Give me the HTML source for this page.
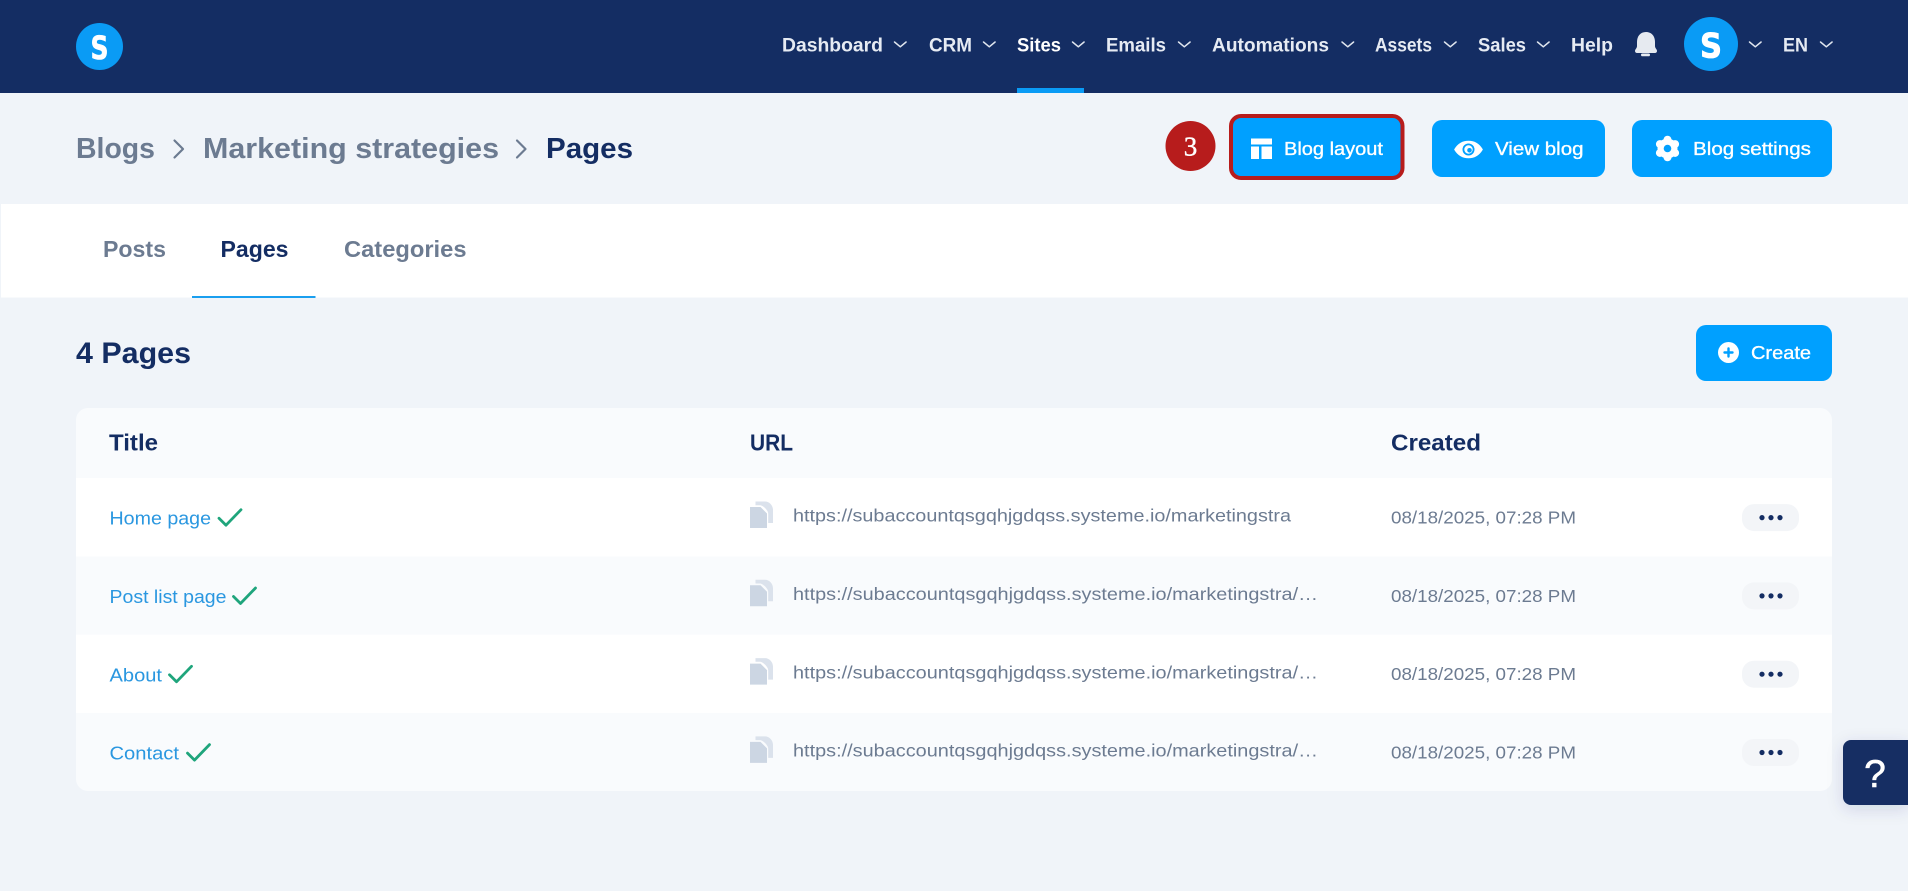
<!DOCTYPE html>
<html lang="en">
<head>
<meta charset="utf-8">
<title>Blog pages</title>
<style>
html,body{margin:0;padding:0;background:#f0f4f9;width:1908px;height:891px;overflow:hidden}
svg{display:block}
text{font-family:"Liberation Sans",sans-serif}
.nav{font-size:19px;font-weight:700;fill:#e6ebf3}
.bc{font-size:29px;font-weight:700;fill:#6c7b91}
.tab{font-size:23px;font-weight:700;fill:#6c7b91}
.btn{font-size:18.5px;fill:#fff;stroke:#fff;stroke-width:.35}
.th{font-size:23px;font-weight:700;fill:#142d63}
.lnk{font-size:18.5px;fill:#2a97e0}
.url{font-size:17.5px;fill:#6c7b91}
.logo{font-weight:700;fill:#fff;stroke:#fff;font-family:"DejaVu Sans",sans-serif}
.chev{fill:none;stroke:#dfe5ee;stroke-width:1.5;stroke-linecap:round;stroke-linejoin:round}
.bcc{fill:none;stroke:#6c7b91;stroke-width:2.2;stroke-linecap:round;stroke-linejoin:round}
.chk{fill:none;stroke:#1fa57c;stroke-width:2.8;stroke-linecap:round;stroke-linejoin:round}
</style>
</head>
<body>
<svg width="1908" height="891" viewBox="0 0 1908 891" xmlns="http://www.w3.org/2000/svg">
<defs>
  <path id="cv" class="chev" d="M0 0l5.800 4.800L11.600 0"/>
  <g id="copy">
    <path fill="#ccd6e3" d="M750 507h10.500l6.500 6.500V528h-17z"/>
    <path fill="#dbe2ec" d="M755.500 501.500h9.500c4.500 0 8 4 8 8.500V523h-4.800V513.500c0-3-5-8-8-8.300h-4.700z"/>
  </g>
  <path id="ck" class="chk" d="M0 8.500L7 15.500L22 0"/>
  <g id="act">
    <rect x="1742" y="-13.500" width="57" height="27" rx="12" fill="#f3f5f8"/>
    <circle cx="1762" cy="0" r="2.600" fill="#142d63"/>
    <circle cx="1771" cy="0" r="2.600" fill="#142d63"/>
    <circle cx="1780" cy="0" r="2.600" fill="#142d63"/>
  </g>
  <filter id="sh" x="-40%" y="-40%" width="180%" height="180%"><feDropShadow dx="0" dy="4" stdDeviation="8" flood-color="#142d63" flood-opacity=".14"/></filter>
</defs>

<!-- page background -->
<rect width="1908" height="891" fill="#f0f4f9"/>

<!-- top navigation -->
<rect width="1908" height="93" fill="#142d63"/>
<circle cx="99.500" cy="46.500" r="23.500" fill="#0a9bf5"/>
<text class="logo" x="90.500" y="59" font-size="32" stroke-width=".6" textLength="18" lengthAdjust="spacingAndGlyphs">S</text>

<text class="nav" x="782" y="51.700" textLength="101" lengthAdjust="spacingAndGlyphs">Dashboard</text>
<use href="#cv" x="894.500" y="42"/>
<text class="nav" x="929" y="51.700" textLength="43" lengthAdjust="spacingAndGlyphs">CRM</text>
<use href="#cv" x="983.500" y="42"/>
<text class="nav" x="1017" y="51.700" textLength="44" lengthAdjust="spacingAndGlyphs" style="fill:#fff">Sites</text>
<use href="#cv" x="1072.500" y="42"/>
<text class="nav" x="1106" y="51.700" textLength="60" lengthAdjust="spacingAndGlyphs">Emails</text>
<use href="#cv" x="1178.500" y="42"/>
<text class="nav" x="1212" y="51.700" textLength="117" lengthAdjust="spacingAndGlyphs">Automations</text>
<use href="#cv" x="1342" y="42"/>
<text class="nav" x="1375" y="51.700" textLength="57" lengthAdjust="spacingAndGlyphs">Assets</text>
<use href="#cv" x="1444.500" y="42"/>
<text class="nav" x="1478" y="51.700" textLength="48" lengthAdjust="spacingAndGlyphs">Sales</text>
<use href="#cv" x="1537.500" y="42"/>
<text class="nav" x="1571" y="51.700" textLength="42" lengthAdjust="spacingAndGlyphs">Help</text>
<rect x="1017" y="88" width="67" height="5" fill="#0a9bf5"/>

<path fill="#e6eaf0" d="M1646 32c-6 0-9 4.500-9 10v4c0 2.500-2 3-2 5 0 1.200 1 2 2 2h18c1 0 2-.8 2-2 0-2-2-2.500-2-5v-4c0-5.500-3-10-9-10z"/>
<rect x="1641" y="53.500" width="9" height="2.800" rx="1.400" fill="#e6eaf0"/>

<circle cx="1711" cy="44" r="27" fill="#0a9bf5"/>
<text class="logo" x="1700" y="57.500" font-size="34" stroke-width=".8" textLength="22" lengthAdjust="spacingAndGlyphs">S</text>
<use href="#cv" x="1749.500" y="42"/>
<text class="nav" x="1783" y="51.700" textLength="25" lengthAdjust="spacingAndGlyphs">EN</text>
<use href="#cv" x="1820.500" y="42"/>

<!-- breadcrumb -->
<text class="bc" x="76" y="158" textLength="79" lengthAdjust="spacingAndGlyphs">Blogs</text>
<path class="bcc" d="M174.500 140.500l8.500 8.500-8.500 8.500"/>
<text class="bc" x="203" y="158" textLength="296" lengthAdjust="spacingAndGlyphs">Marketing strategies</text>
<path class="bcc" d="M517 140.500l8.500 8.500-8.500 8.500"/>
<text class="bc" x="546" y="158" textLength="87" lengthAdjust="spacingAndGlyphs" style="fill:#142d63">Pages</text>

<!-- step badge -->
<circle cx="1190.500" cy="146" r="25" fill="#b71c1c"/>
<text x="1190.500" y="155.500" font-size="27" text-anchor="middle" fill="#fff" stroke="#fff" stroke-width=".4" style='font-family:"Liberation Serif",serif'>3</text>

<!-- Blog layout -->
<rect x="1231" y="116" width="171.500" height="62" rx="10" fill="#00a0ff" stroke="#b71c1c" stroke-width="4"/>
<rect x="1251" y="138.500" width="21" height="6" fill="#fff"/>
<rect x="1251" y="146.500" width="8" height="12.500" fill="#fff"/>
<rect x="1261.500" y="146.500" width="10.500" height="12.500" fill="#fff"/>
<text class="btn" x="1284" y="155" textLength="99" lengthAdjust="spacingAndGlyphs">Blog layout</text>

<!-- View blog -->
<rect x="1432" y="120" width="173" height="57" rx="10" fill="#00a0ff"/>
<path fill="#fff" stroke="#fff" stroke-width="1.600" stroke-linejoin="round" d="M1455 149.500c3.300-5.500 8-8 13.500-8s10.200 2.500 13.500 8c-3.300 5.500-8 8-13.500 8s-10.200-2.500-13.500-8z"/>
<circle cx="1468.500" cy="149.500" r="6" fill="#00a0ff"/>
<circle cx="1468.500" cy="149.500" r="4.200" fill="#fff"/>
<circle cx="1469.500" cy="150.300" r="2.300" fill="#00a0ff"/>
<text class="btn" x="1495" y="155" textLength="88.500" lengthAdjust="spacingAndGlyphs">View blog</text>

<!-- Blog settings -->
<rect x="1632" y="120" width="200" height="57" rx="10" fill="#00a0ff"/>
<g stroke="#fff" stroke-width="8" stroke-linecap="round">
  <line x1="1667.500" y1="148.500" x2="1667.500" y2="139.700"/>
  <line x1="1667.500" y1="148.500" x2="1667.500" y2="157.300"/>
  <line x1="1667.500" y1="148.500" x2="1675.100" y2="144.100"/>
  <line x1="1667.500" y1="148.500" x2="1659.900" y2="152.900"/>
  <line x1="1667.500" y1="148.500" x2="1659.900" y2="144.100"/>
  <line x1="1667.500" y1="148.500" x2="1675.100" y2="152.900"/>
</g>
<circle cx="1667.500" cy="148.500" r="10" fill="#fff"/>
<circle cx="1667.500" cy="148.500" r="3.800" fill="#00a0ff"/>
<text class="btn" x="1693" y="155" textLength="118" lengthAdjust="spacingAndGlyphs">Blog settings</text>

<!-- tabs -->
<rect x="1" y="204" width="1907" height="93.500" fill="#fff"/>
<text class="tab" x="103" y="257" textLength="63" lengthAdjust="spacingAndGlyphs">Posts</text>
<text class="tab" x="220.500" y="257" textLength="68" lengthAdjust="spacingAndGlyphs" style="fill:#142d63">Pages</text>
<text class="tab" x="344" y="257" textLength="122.500" lengthAdjust="spacingAndGlyphs">Categories</text>
<rect x="192" y="296" width="123.500" height="2" fill="#1a9fef"/>

<!-- count + create -->
<text x="76" y="363" font-size="30" font-weight="700" fill="#142d63" textLength="115" lengthAdjust="spacingAndGlyphs">4 Pages</text>
<rect x="1696" y="325" width="136" height="56" rx="10" fill="#00a0ff"/>
<circle cx="1728.500" cy="352.500" r="10.500" fill="#fff"/>
<path d="M1728.500 348.500v8M1724.500 352.500h8" stroke="#00a0ff" stroke-width="2.400" stroke-linecap="round"/>
<text class="btn" x="1751" y="359" textLength="60" lengthAdjust="spacingAndGlyphs">Create</text>

<!-- table -->
<rect x="76" y="408" width="1756" height="383" rx="12" fill="#f9fbfd"/>
<rect x="76" y="478" width="1756" height="78.400" fill="#fff"/>
<rect x="76" y="634.700" width="1756" height="78.300" fill="#fff"/>

<text class="th" x="109" y="450.500" textLength="49" lengthAdjust="spacingAndGlyphs">Title</text>
<text class="th" x="750" y="450.500" textLength="43" lengthAdjust="spacingAndGlyphs">URL</text>
<text class="th" x="1391" y="450.500" textLength="90" lengthAdjust="spacingAndGlyphs">Created</text>

<!-- row 1 -->
<text class="lnk" x="109.500" y="524.700" textLength="101.500" lengthAdjust="spacingAndGlyphs">Home page</text>
<use href="#ck" x="219" y="509.700"/>
<use href="#copy"/>
<text class="url" x="793" y="521.700" textLength="498" lengthAdjust="spacingAndGlyphs">https://subaccountqsgqhjgdqss.systeme.io/marketingstra</text>
<text class="url" x="1391" y="523.500" textLength="185" lengthAdjust="spacingAndGlyphs">08/18/2025, 07:28 PM</text>
<use href="#act" y="517.600"/>

<!-- row 2 -->
<text class="lnk" x="109.500" y="603" textLength="117" lengthAdjust="spacingAndGlyphs">Post list page</text>
<use href="#ck" x="233.500" y="588"/>
<use href="#copy" y="78.300"/>
<text class="url" x="793" y="600" textLength="525" lengthAdjust="spacingAndGlyphs">https://subaccountqsgqhjgdqss.systeme.io/marketingstra/…</text>
<text class="url" x="1391" y="601.800" textLength="185" lengthAdjust="spacingAndGlyphs">08/18/2025, 07:28 PM</text>
<use href="#act" y="595.900"/>

<!-- row 3 -->
<text class="lnk" x="109.500" y="681.300" textLength="52.500" lengthAdjust="spacingAndGlyphs">About</text>
<use href="#ck" x="169.500" y="666.300"/>
<use href="#copy" y="156.600"/>
<text class="url" x="793" y="678.300" textLength="525" lengthAdjust="spacingAndGlyphs">https://subaccountqsgqhjgdqss.systeme.io/marketingstra/…</text>
<text class="url" x="1391" y="680.100" textLength="185" lengthAdjust="spacingAndGlyphs">08/18/2025, 07:28 PM</text>
<use href="#act" y="674.200"/>

<!-- row 4 -->
<text class="lnk" x="109.500" y="759.600" textLength="69.500" lengthAdjust="spacingAndGlyphs">Contact</text>
<use href="#ck" x="187.500" y="744.600"/>
<use href="#copy" y="234.900"/>
<text class="url" x="793" y="756.600" textLength="525" lengthAdjust="spacingAndGlyphs">https://subaccountqsgqhjgdqss.systeme.io/marketingstra/…</text>
<text class="url" x="1391" y="758.400" textLength="185" lengthAdjust="spacingAndGlyphs">08/18/2025, 07:28 PM</text>
<use href="#act" y="752.500"/>

<!-- help -->
<path d="M1908 740h-57a8 8 0 0 0-8 8v49a8 8 0 0 0 8 8h57z" fill="#142d63" filter="url(#sh)"/>
<text x="1875" y="787" font-size="39" text-anchor="middle" fill="#fff" stroke="#fff" stroke-width=".6">?</text>
</svg>
</body>
</html>
